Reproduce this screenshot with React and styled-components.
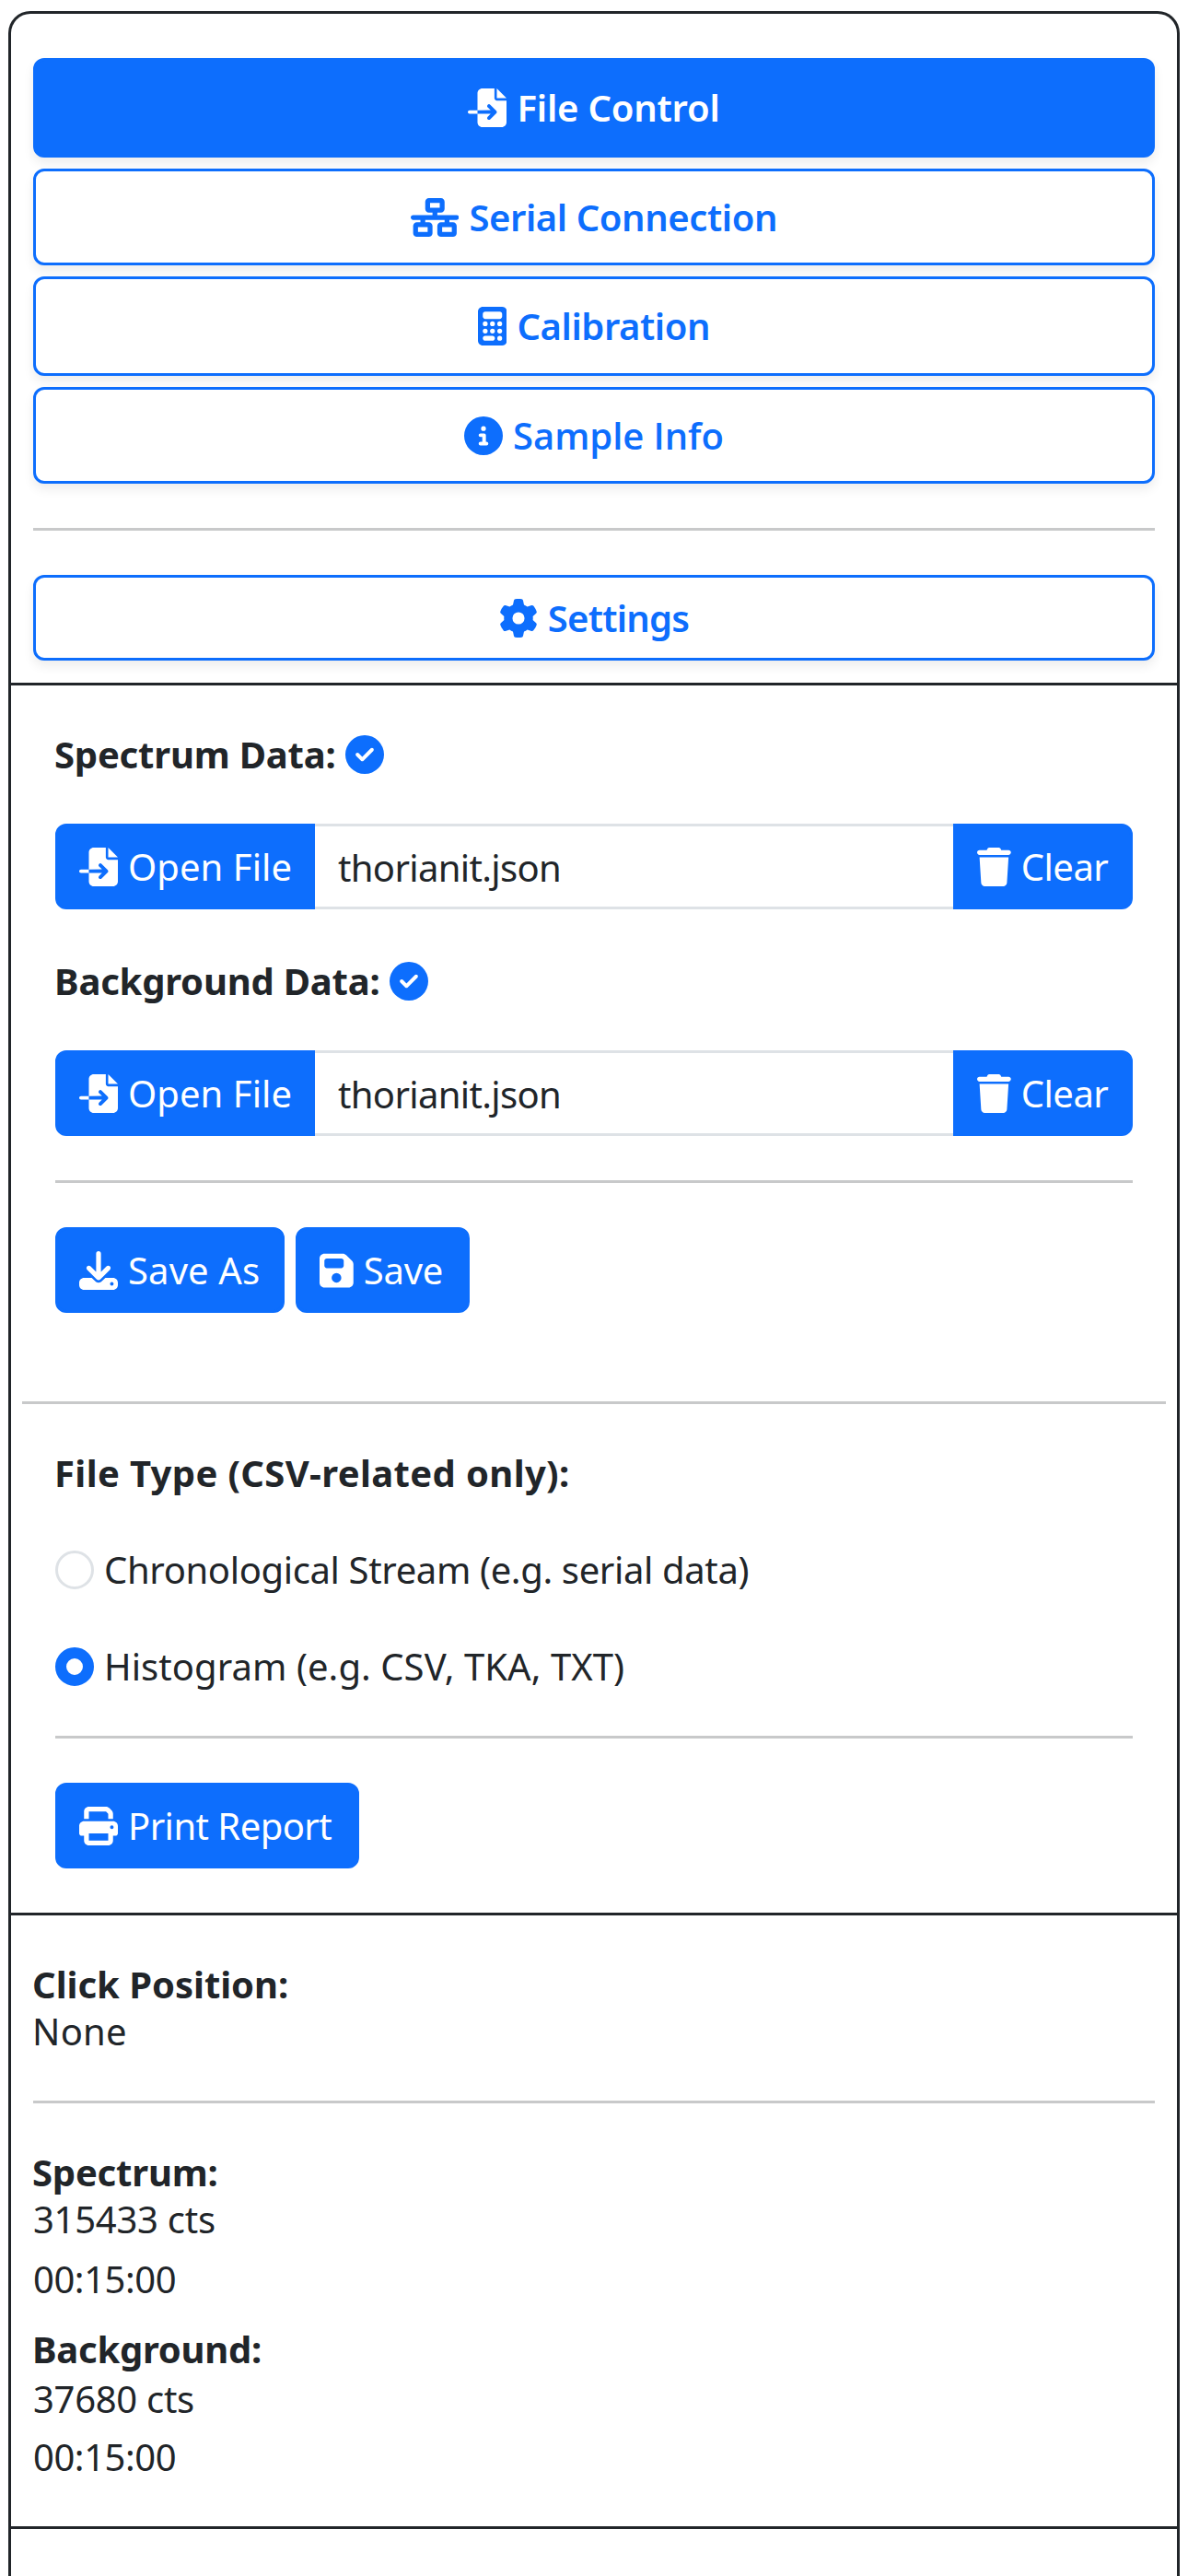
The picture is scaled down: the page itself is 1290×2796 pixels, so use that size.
import React from "react";
import styled, { createGlobalStyle, css } from "styled-components";
import {
  FaFileImport,
  FaNetworkWired,
  FaCalculator,
  FaCircleInfo,
  FaGear,
  FaCircleCheck,
  FaTrash,
  FaDownload,
  FaFloppyDisk,
  FaPrint,
} from "react-icons/fa6";

const blue = "#0d6efd";
const ink = "#212529";

const GlobalStyle = createGlobalStyle`
  *, *::before, *::after { box-sizing: border-box; }
  html, body { margin: 0; background: #fff; overflow: hidden; }
  body {
    color: ${ink};
    font-family: "Noto Sans", "Open Sans", sans-serif;
    font-size: 40px;
    height: 100vh;
  }
`;

const Page = styled.main`
  height: 2796px;
  padding: 12px 9px 0;
  overflow: hidden;
`;

const Panel = styled.div`
  height: 2784px;
  border: 3px solid ${ink};
  border-bottom: 0;
  border-radius: 24px 24px 0 0;
`;

const Section = styled.section`
  display: flex;
  flex-direction: column;
  padding: ${(p) => p.$pad};
  border-bottom: 3px solid ${ink};
`;

const Rule = styled.hr`
  width: auto;
  align-self: stretch;
  height: 3px;
  margin: ${(p) => p.$margin};
  border: 0;
  background: #c8c9ca;
`;

const Label = styled.span`
  white-space: nowrap;
  letter-spacing: ${(p) => p.$track || 0}px;
  font-family: ${(p) => (p.$plain ? '"Open Sans", sans-serif' : "inherit")};
`;

const Icon = styled.span`
  display: inline-flex;
  flex: none;
  svg {
    width: ${(p) => p.$w || 42}px;
    height: 42px;
  }
`;

const buttonBase = css`
  display: flex;
  align-items: center;
  border: 3px solid ${blue};
  border-radius: 12px;
  font-family: inherit;
  font-size: 40px;
  line-height: 60px;
`;

const NavList = styled.nav`
  display: flex;
  flex-direction: column;
  gap: 12px;
`;

const NavButton = styled.button`
  ${buttonBase}
  gap: 11px;
  justify-content: center;
  height: ${(p) => p.$h}px;
  padding: 0;
  font-weight: 600;
  color: ${(p) => (p.$active ? "#fff" : blue)};
  background: ${(p) => (p.$active ? blue : "#fff")};
  box-shadow: 0 6px 12px rgba(0, 0, 0, 0.075);
`;

const ActionButton = styled.button`
  ${buttonBase}
  gap: 11px;
  width: ${(p) => p.$w}px;
  height: 93px;
  padding: 1px 0 0 23px;
  color: #fff;
  background: ${blue};
`;

const FieldTitle = styled.div`
  display: flex;
  align-items: center;
  gap: 11px;
  height: 63px;
  margin-left: -1px;
  font-weight: 700;
  line-height: 62px;
  svg { color: ${blue}; }
`;

const InputGroup = styled.div`
  display: flex;
  height: 93px;
  margin: 44px 0 ${(p) => p.$bottom}px;
  ${ActionButton}:first-child { border-radius: 12px 0 0 12px; }
  ${ActionButton}:last-child { border-radius: 0 12px 12px 0; }
`;

const FileName = styled.div`
  flex: 1;
  display: flex;
  align-items: center;
  padding: 1px 0 0 25px;
  border: solid #dee2e6;
  border-width: 3px 0;
`;

const ButtonRow = styled.div`
  display: flex;
  gap: 12px;
`;

const RadioRow = styled.label`
  display: flex;
  align-items: center;
  gap: 11px;
  height: 64px;
  margin-top: ${(p) => p.$top}px;
  ${Label} { padding-bottom: 2px; }
`;

const Radio = styled.input`
  appearance: none;
  flex: none;
  width: 42px;
  height: 42px;
  margin: 0;
  border: 3px solid #dee2e6;
  border-radius: 50%;
  background: #fff;
  &:checked {
    border: 12px solid ${blue};
  }
`;

const Line = styled.div`
  height: 50px;
  line-height: 50px;
  margin-top: ${(p) => p.$top || 0}px;
  margin-left: ${(p) => (p.$digits ? 0 : -1)}px;
  font-weight: ${(p) => (p.$bold ? 700 : 400)};
`;

const navItems = [
  { label: "File Control", icon: FaFileImport, h: 108, track: -0.2, active: true },
  { label: "Serial Connection", icon: FaNetworkWired, h: 105, w: 52.5, track: -0.42 },
  { label: "Calibration", icon: FaCalculator, h: 108, w: 31.5, track: -0.43 },
  { label: "Sample Info", icon: FaCircleInfo, h: 105, track: -0.05, plain: true },
];

function NavItem({ item }) {
  const Glyph = item.icon;
  return (
    <NavButton $h={item.h} $active={item.active}>
      <Icon $w={item.w}><Glyph /></Icon>
      <Label $track={item.track} $plain={item.plain}>{item.label}</Label>
    </NavButton>
  );
}

function DataFile({ title, track, bottom }) {
  return (
    <>
      <FieldTitle>
        <Label $track={track}>{title}</Label>
        <Icon><FaCircleCheck /></Icon>
      </FieldTitle>
      <InputGroup $bottom={bottom}>
        <ActionButton $w={282}>
          <Icon><FaFileImport /></Icon>
          <Label $track={0.07}>Open File</Label>
        </ActionButton>
        <FileName><Label $track={-0.66}>thorianit.json</Label></FileName>
        <ActionButton $w={195}>
          <Icon $w={36.75}><FaTrash /></Icon>
          <Label $track={-0.5}>Clear</Label>
        </ActionButton>
      </InputGroup>
    </>
  );
}

export default function App() {
  return (
    <Page>
      <GlobalStyle />
      <Panel>
        <Section $pad="48px 24px 24px">
          <NavList>
            {navItems.map((item) => <NavItem key={item.label} item={item} />)}
          </NavList>
          <Rule $margin="48px 0" />
          <NavItem item={{ label: "Settings", icon: FaGear, h: 93, track: -0.74 }} />
        </Section>

        <Section $pad="43px 48px 48px">
          <DataFile title="Spectrum Data:" track={-0.2} bottom={46} />
          <DataFile title="Background Data:" track={-0.21} bottom={48} />
          <Rule $margin="0 0 48px" />
          <ButtonRow>
            <ActionButton $w={249}>
              <Icon><FaDownload /></Icon>
              <Label $track={0.13}>Save As</Label>
            </ActionButton>
            <ActionButton $w={189}>
              <Icon $w={36.75}><FaFloppyDisk /></Icon>
              <Label $track={-0.24}>Save</Label>
            </ActionButton>
          </ButtonRow>
          <Rule $margin="96px -36px 43px" />
          <FieldTitle><Label $track={0.36}>File Type (CSV-related only):</Label></FieldTitle>
          <RadioRow $top={42}>
            <Radio type="radio" name="fileType" />
            <Label $track={-0.36}>Chronological Stream (e.g. serial data)</Label>
          </RadioRow>
          <RadioRow $top={41}>
            <Radio type="radio" name="fileType" defaultChecked />
            <Label $track={0.06}>Histogram (e.g. CSV, TKA, TXT)</Label>
          </RadioRow>
          <Rule $margin="43px 0 48px" />
          <ActionButton $w={330}>
            <Icon><FaPrint /></Icon>
            <Label $track={-0.55}>Print Report</Label>
          </ActionButton>
        </Section>

        <Section $pad="50px 24px 50px">
          <Line $bold><Label $track={-0.04}>Click Position:</Label></Line>
          <Line $top={1}><Label $track={0.23}>None</Label></Line>
          <Rule $margin="50px 0 50px" />
          <Line $bold><Label $track={-0.2}>Spectrum:</Label></Line>
          <Line $digits $top={1}><Label $track={-0.26}>315433 cts</Label></Line>
          <Line $digits $top={15}><Label $track={-0.45}>00:15:00</Label></Line>
          <Line $bold $top={26}><Label $track={-0.26}>Background:</Label></Line>
          <Line $digits $top={4}><Label $track={-0.3}>37680 cts</Label></Line>
          <Line $digits $top={13}><Label $track={-0.45}>00:15:00</Label></Line>
        </Section>
      </Panel>
    </Page>
  );
}
